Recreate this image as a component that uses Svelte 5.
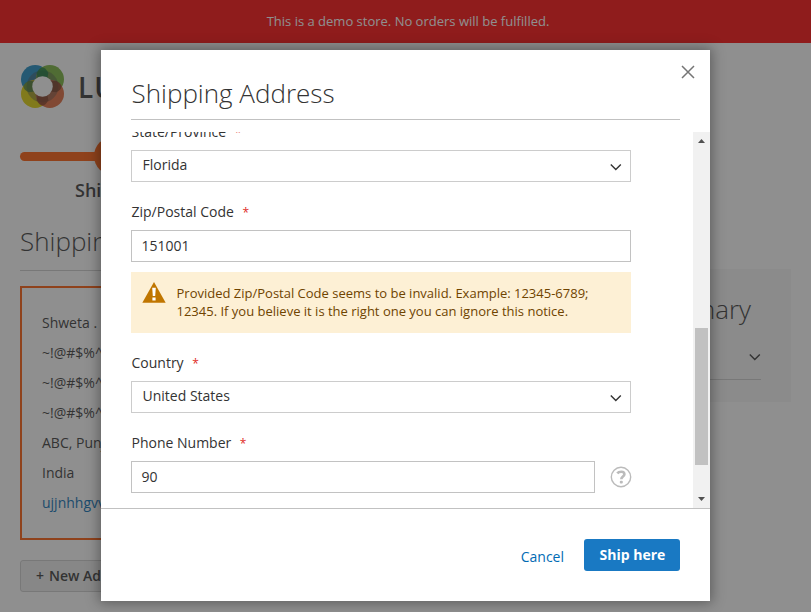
<script>
  const lines = ['Shweta .', '~!@#$%^&*()_+', '~!@#$%^&*()_+', '~!@#$%^&*()_+', 'ABC, Punjab 151001', 'India'];
</script>

{#snippet chevron()}
  <svg width="12" height="8" viewBox="0 0 12 8"><path d="M.8 1.5 5.8 6.5 10.8 1.5" fill="none" stroke="#333" stroke-width="1.4" /></svg>
{/snippet}

{#snippet label(text)}
  <div class="label">{text}<span class="star">*</span></div>
{/snippet}

<div class="screen">
  <div class="page">
    <div class="banner">This is a demo store. No orders will be fulfilled.</div>
    <header class="brand">
      <svg width="43" height="43" viewBox="0 0 44 44">
        <circle cx="14.5" cy="14.5" r="14.5" fill="#1688c0" />
        <circle cx="29.5" cy="14.5" r="14.5" fill="#73b135" />
        <circle cx="14.5" cy="29.5" r="14.5" fill="#e0d000" />
        <circle cx="29.5" cy="29.5" r="14.5" fill="#e06535" />
        <circle cx="22" cy="22" r="16.3" fill="#444" opacity=".4" />
        <path d="M16 8Q22-3 28 8L27 14H17Z" fill="#006b35" opacity=".75" />
        <path d="M8 16Q-3 22 8 28L14 27V17Z" fill="#176137" opacity=".65" />
        <path d="M36 16Q47 22 36 28L30 27V17Z" fill="#602b16" opacity=".7" />
        <path d="M16 36Q22 47 28 36L27 30H17Z" fill="#702c16" opacity=".7" />
        <circle cx="22" cy="22" r="10.5" fill="#fff" />
      </svg>
      <span class="word">LUMA</span>
    </header>
    <div class="progress"><i></i><b></b></div>
    <div class="step">Shipping</div>
    <div class="columns">
      <main>
        <h2>Shipping Address</h2>
        <div class="card">
          {#each lines as line}<div>{line}</div>{/each}
          <div class="link">ujjnhhgvvbb</div>
        </div>
        <div class="newaddr"><span>+</span>New Address</div>
      </main>
      <aside>
        <div class="sumtitle">Order Summary</div>
        <div class="sumrow">{@render chevron()}</div>
      </aside>
    </div>
  </div>
  <div class="overlay"></div>
  <div class="modal">
    <div class="head">
      <h1>Shipping Address</h1>
      <svg class="close" width="14" height="14" viewBox="0 0 14 14"><path d="M1 1 13 13M13 1 1 13" stroke="#757575" stroke-width="1.5" /></svg>
    </div>
    <div class="content">
      <div class="form">
        {@render label('State/Province')}
        <div class="control select"><span>Florida</span>{@render chevron()}</div>
        {@render label('Zip/Postal Code')}
        <div class="control">151001</div>
        <div class="notice">
          <svg width="24" height="21" viewBox="0 0 24 21">
            <path d="M12 0 23.7 20.7H.3Z" fill="#c07600" />
            <path d="M10.2 5.8h3.6l-.6 8.2h-2.4ZM10.4 15.4h3.2v3h-3.2Z" fill="#fff" />
          </svg>
          <p>Provided Zip/Postal Code seems to be invalid. Example: 12345-6789;<br />12345. If you believe it is the right one you can ignore this notice.</p>
        </div>
        {@render label('Country')}
        <div class="control select"><span>United States</span>{@render chevron()}</div>
        {@render label('Phone Number')}
        <div class="phone">
          <div class="control">90</div>
          <svg width="22" height="22" viewBox="0 0 22 22">
            <circle cx="11" cy="11" r="9.7" fill="none" stroke="#bbb" stroke-width="1.4" />
            <path d="M7.3 7.4C8.8 5.4 14.4 4.7 14.4 8.2 14.4 10.5 11.3 10.5 11.3 13.2" fill="none" stroke="#bbb" stroke-width="2.6" />
            <rect x="9.8" y="14.7" width="3" height="2.8" rx="1" fill="#bbb" />
          </svg>
        </div>
      </div>
      <div class="scroll">
        <svg width="7" height="4" viewBox="0 0 7 4"><path d="M0 4 3.5 0 7 4Z" fill="#505050" /></svg>
        <div class="track"><div class="thumb"></div></div>
        <svg width="7" height="4" viewBox="0 0 7 4"><path d="M0 0 3.5 4 7 0Z" fill="#505050" /></svg>
      </div>
    </div>
    <footer>
      <span class="cancel">Cancel</span>
      <button>Ship here</button>
    </footer>
  </div>
</div>

<style>
  .screen { position: relative; width: 811px; height: 612px; overflow: hidden; font: 14px/20px "Open Sans", sans-serif; color: #333; background: #fff; }
  .screen :global(svg) { display: block; flex: none; }
  .page { height: 612px; }
  .banner { height: 43px; line-height: 42px; text-align: center; font-size: 13px; padding-left: 5px; box-sizing: border-box; background: #f00; color: #fff; }
  .brand { display: flex; align-items: center; padding: 22px 0 0 21px; height: 43px; }
  .word { font-size: 28px; line-height: 40px; font-weight: 600; margin-left: 14px; letter-spacing: 1px; }
  .progress { display: flex; align-items: center; height: 38px; margin: 29px 0 0 20px; }
  .progress i { width: 80px; height: 9px; border-radius: 5px 0 0 5px; background: #ff5501; }
  .progress b { width: 38px; height: 38px; margin-left: -6px; border-radius: 50%; background: #ff5501; }
  .step { margin: 3px 0 0 75px; font-size: 18px; line-height: 24px; font-weight: 600; }
  .columns { display: flex; justify-content: space-between; padding: 21px 20px 0; }
  main { width: 500px; }
  h2, h1 { margin: 0; font-size: 26px; font-weight: 300; }
  h2 { line-height: 36px; padding-bottom: 11px; border-bottom: 1px solid #ccc; }
  .card { width: 220px; height: 254px; box-sizing: border-box; margin-top: 15px; padding: 20px; border: 2px solid #ff5501; line-height: 30px; white-space: nowrap; }
  .link { color: #006bb4; }
  .newaddr { width: 150px; height: 32px; box-sizing: border-box; margin-top: 20px; padding-left: 15px; border: 1px solid #ccc; border-radius: 3px; background: #eee; line-height: 30px; font-weight: 600; }
  .newaddr span { margin-right: 5px; }
  aside { width: 180px; height: 133px; box-sizing: border-box; margin-top: 46px; padding: 22px 30px 0; background: #f5f5f5; }
  .sumtitle { display: flex; justify-content: flex-end; font-size: 26px; line-height: 36px; font-weight: 300; white-space: nowrap; margin-right: 10px; }
  .sumrow { display: flex; justify-content: flex-end; margin-top: 26px; height: 26px; border-bottom: 1px solid #ccc; }
  .overlay { position: absolute; inset: 0; background: rgba(51, 51, 51, .55); }
  .modal { position: absolute; left: 101px; top: 50px; width: 609px; height: 551px; display: flex; flex-direction: column; background: #fff; box-shadow: 0 0 12px 2px rgba(0, 0, 0, .35); }
  .head { display: flex; justify-content: space-between; height: 70px; box-sizing: border-box; margin: 0 30px; border-bottom: 1px solid #c1c1c1; }
  h1 { line-height: 36px; margin-top: 25px; padding-left: .5px; }
  .close { margin: 15px -15px 0 0; }
  .content { display: flex; justify-content: space-between; height: 376px; margin-top: 12px; overflow: hidden; }
  .form { width: 500px; margin: -10px 0 0 30px; }
  .label { height: 20px; margin-bottom: 8px; padding-left: .5px; }
  .star { margin-left: 8.5px; color: #e02b27; font-size: 12px; }
  .control { height: 32px; box-sizing: border-box; border: 1px solid #c2c2c2; padding: 0 9.5px; line-height: 30px; margin-bottom: 20px; }
  .select { display: flex; justify-content: space-between; padding: 0 9px 0 10.5px; border-color: #ccc; line-height: 28px; }
  .select :global(svg) { margin: 12px -1px 0 0; }
  .notice { display: flex; height: 61px; box-sizing: border-box; margin: -10px 0 20px; padding: 10px 11px; background: #fdf0d5; color: #6f4400; font-size: 13px; line-height: 18px; }
  .notice p { margin: 2px 0 0 10.5px; white-space: nowrap; }
  .phone { display: flex; justify-content: space-between; }
  .phone .control { width: 464px; }
  .phone svg { margin: 5px -1px 0 0; }
  .scroll { display: flex; flex-direction: column; align-items: center; justify-content: space-between; width: 17px; box-sizing: border-box; padding: 7px 0; background: #f1f1f1; }
  .track { height: 342px; box-sizing: border-box; padding-top: 179px; }
  .thumb { width: 13px; height: 137px; background: #c1c1c1; }
  footer { display: flex; justify-content: flex-end; height: 93px; box-sizing: border-box; padding: 30px 30px 0; border-top: 1px solid #c1c1c1; }
  .cancel { margin: 8px 20px 0 0; color: #006bb4; }
  button { width: 96px; height: 32px; padding: 0 0 0 1px; border: 0; border-radius: 3px; background: #1979c3; color: #fff; font: 700 14px/30px "Open Sans", sans-serif; }
</style>
